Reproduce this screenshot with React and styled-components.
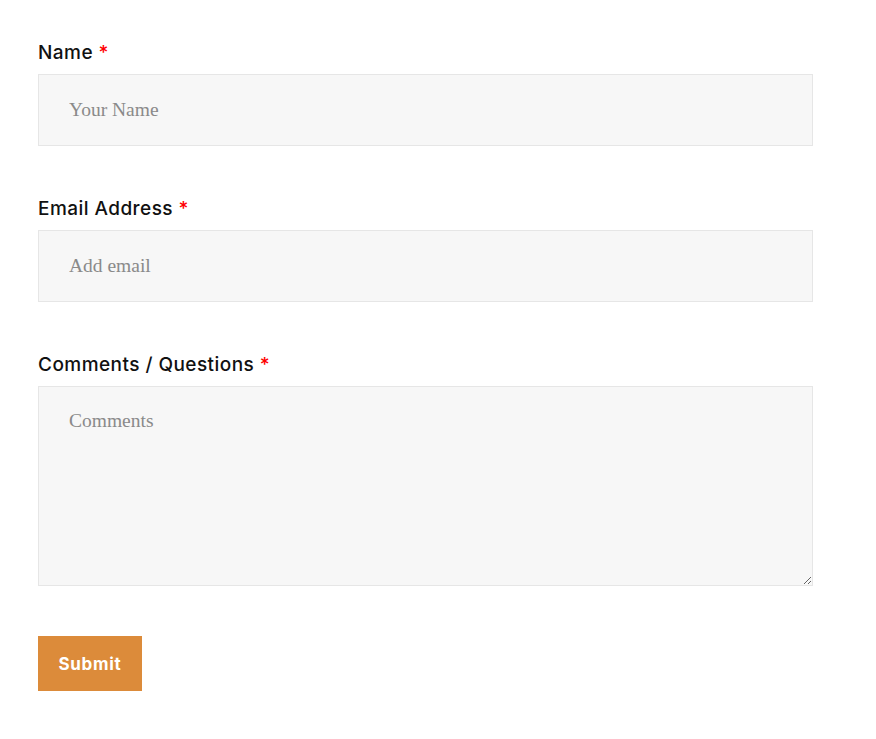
import React from 'react';
import styled, { createGlobalStyle } from 'styled-components';

const GlobalStyle = createGlobalStyle`
body {
  margin: 0;
  background: #fff;
  font-family: "Inter", "Open Sans", sans-serif;
}
`

export default function App() {
    return (
        <>
            <GlobalStyle />
            <Page>
                <Form onSubmit={e => e.preventDefault()}>
                    <Field>
                        <Label>Name <Req>*</Req></Label>
                        <Input type="text" placeholder="Your Name" />
                    </Field>
                    <Field>
                        <Label>Email Address <Req>*</Req></Label>
                        <Input type="email" placeholder="Add email" />
                    </Field>
                    <Field>
                        <Label>Comments / Questions <Req>*</Req></Label>
                        <TextArea placeholder="Comments" />
                    </Field>
                    <SubmitButton type="submit">Submit</SubmitButton>
                </Form>
            </Page>
        </>
    )
}

const Page = styled.div`
padding: 39px 38px 40px;
`

const Form = styled.form`
width: 775px;
display: flex;
flex-direction: column;
align-items: flex-start;
`

const Field = styled.div`
width: 100%;
display: flex;
flex-direction: column;
margin-bottom: 49px;
`

const Label = styled.label`
font-family: "Inter", "Open Sans", sans-serif;
font-size: 19px;
font-weight: 500;
line-height: 27px;
color: #111;
margin-bottom: 8px;
letter-spacing: 0.45px;
`

const Req = styled.span`
color: #f00;
`

const fieldBase = `
box-sizing: border-box;
width: 100%;
background: #f7f7f7;
border: 1px solid #e6e6e6;
font-family: "Liberation Serif", "DejaVu Serif", serif;
font-size: 19.5px;
color: #333;
outline: none;
&::placeholder {
  color: #8a8a8a;
}
`

const Input = styled.input`
${fieldBase}
height: 72px;
padding: 0 30px;
`

const TextArea = styled.textarea`
${fieldBase}
height: 200px;
padding: 23px 30px;
resize: vertical;
`

const SubmitButton = styled.button`
margin-top: 1px;
width: 104px;
height: 55px;
padding: 0;
border: none;
background: #dc8b3a;
color: #fff;
font-family: "Inter", "Open Sans", sans-serif;
font-size: 17px;
font-weight: 700;
letter-spacing: 0.7px;
cursor: pointer;
`
